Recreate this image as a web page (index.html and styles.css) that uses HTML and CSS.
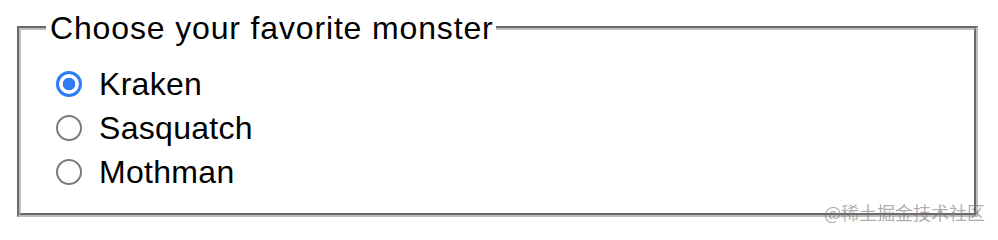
FILE: index.html
```html
<!DOCTYPE html>
<html>
<head>
<meta charset="utf-8">
<link rel="stylesheet" href="styles.css">
</head>
<body>
<div class="page">
  <fieldset class="group">
    <legend class="group-title">Choose your favorite monster</legend>
    <label class="option"><input class="radio" type="radio" name="monster" value="kraken" checked><span>Kraken</span></label>
    <label class="option"><input class="radio" type="radio" name="monster" value="sasquatch"><span>Sasquatch</span></label>
    <label class="option"><input class="radio" type="radio" name="monster" value="mothman"><span>Mothman</span></label>
  </fieldset>
  <div class="watermark">@稀土掘金技术社区</div>
</div>
</body>
</html>
```
FILE: styles.css
```css
html, body {
  margin: 0;
  padding: 0;
  background: #fff;
}
.page {
  position: relative;
  width: 998px;
  height: 234px;
  padding: 11px 0 0 17px;
  box-sizing: border-box;
  font-family: "Liberation Sans", Arial, sans-serif;
  color: #000;
}
.group {
  width: 961px;
  height: 206px;
  box-sizing: border-box;
  margin: 0;
  border: 4px groove #bdbdbd;
  padding: 17px 24px 0 35px;
  display: flex;
  flex-direction: column;
}
.group-title {
  font-size: 32px;
  line-height: 34px;
  padding: 0 2px 0 4px;
  margin-left: -10px;
  letter-spacing: 0.85px;
}
.option {
  display: flex;
  align-items: center;
  height: 44px;
  font-size: 32px;
  letter-spacing: 0.3px;
}
.radio {
  appearance: none;
  -webkit-appearance: none;
  width: 26px;
  height: 26px;
  margin: 0 17px 0 0;
  box-sizing: border-box;
  border: 2px solid #7b7b7b;
  border-radius: 50%;
  background: #fff;
  flex: none;
}
.radio:checked {
  border: 3px solid #2f7df6;
  background: radial-gradient(circle, #2f7df6 0 6px, #fff 6.6px);
}
.watermark {
  position: absolute;
  right: 13px;
  top: 199px;
  font-family: "Noto Sans CJK SC", sans-serif;
  font-size: 18px;
  line-height: 26px;
  color: rgba(120, 120, 120, 0.6);
}
```
